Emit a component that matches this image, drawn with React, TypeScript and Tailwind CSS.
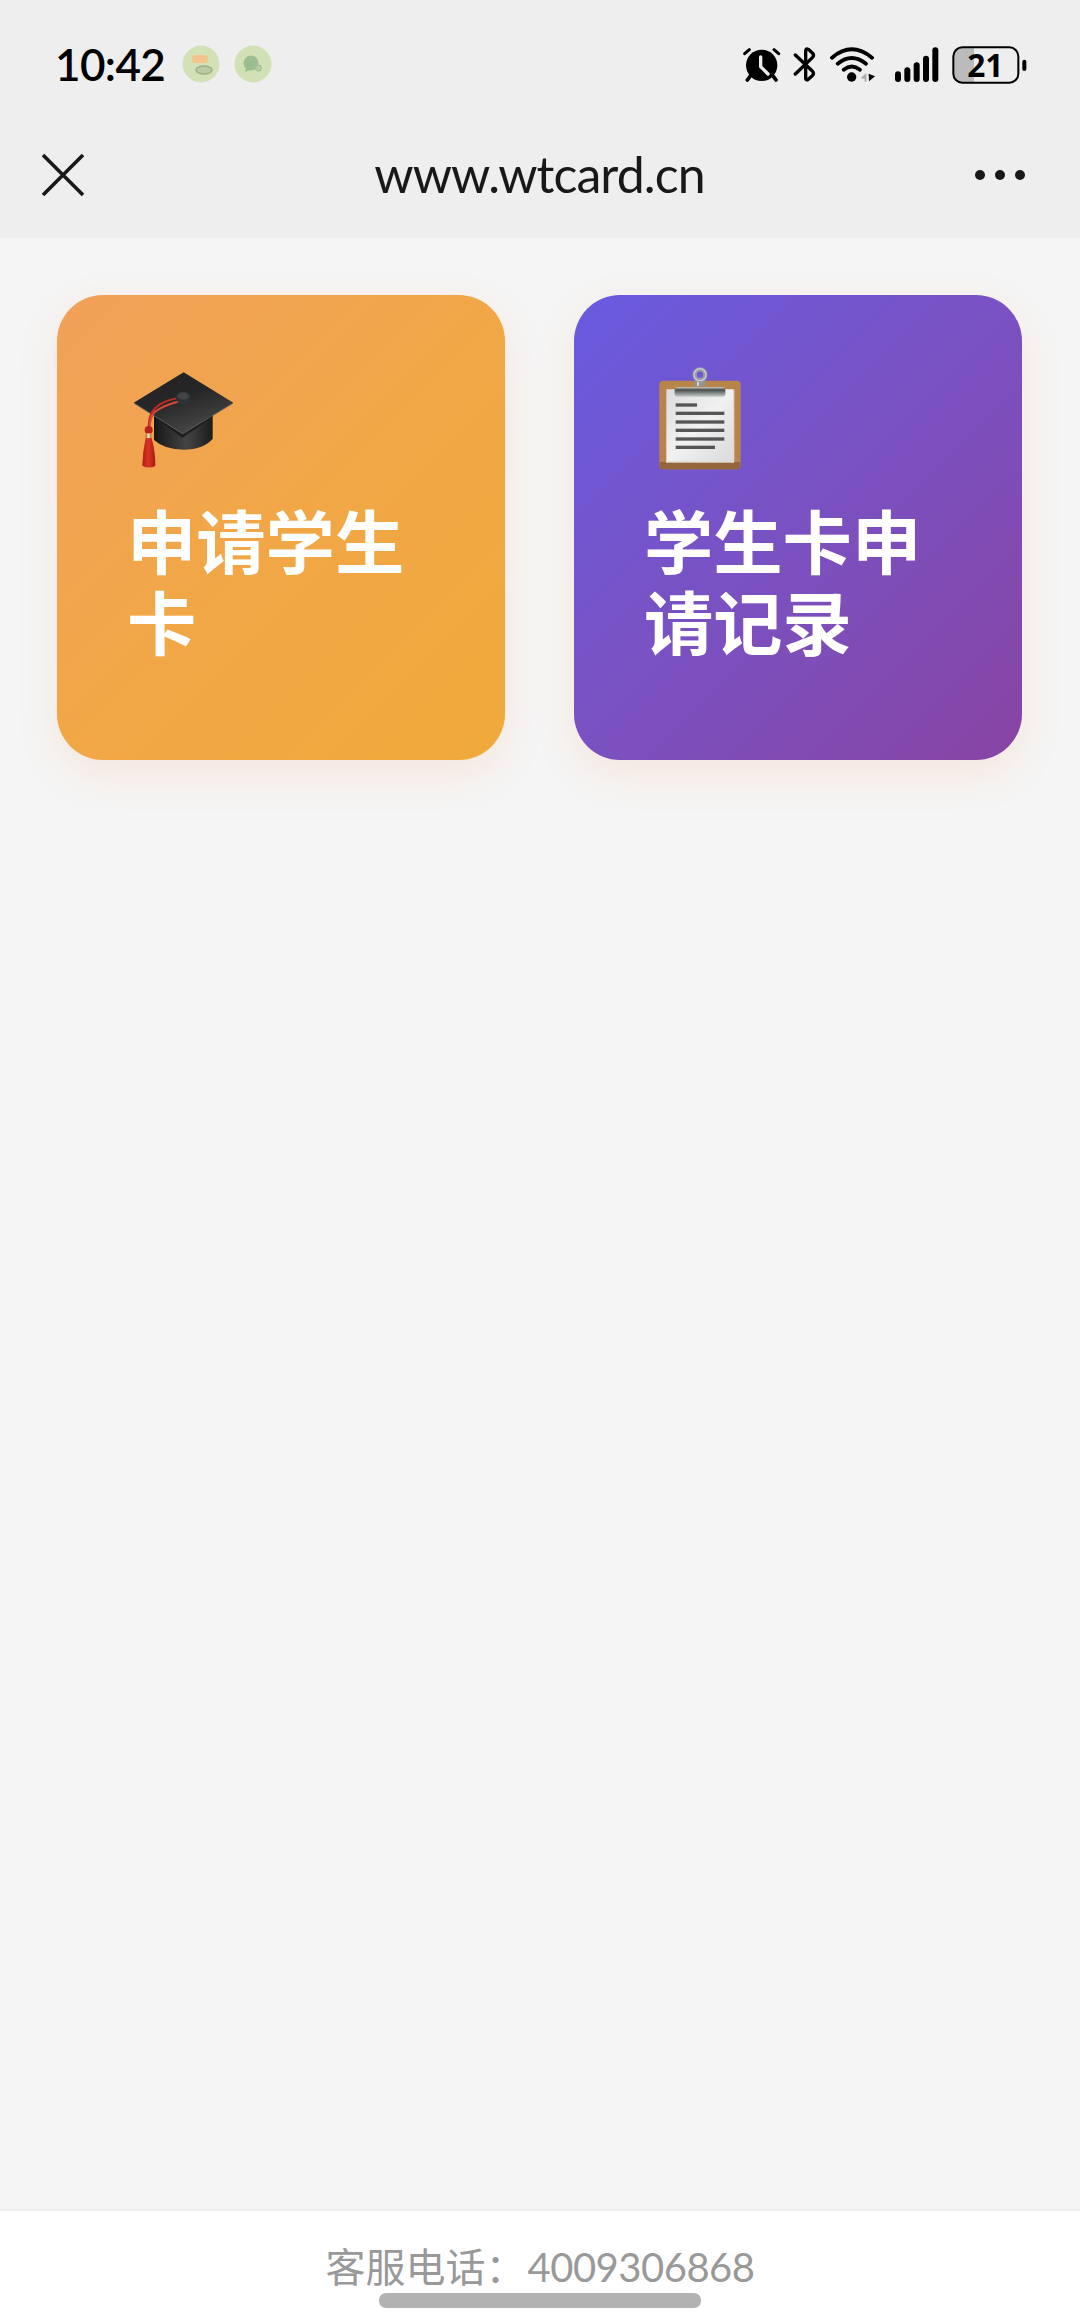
import type { ReactNode } from 'react'

interface CardProps {
  title: string
  icon: ReactNode
  className: string
}

function AlarmIcon() {
  return (
    <svg viewBox="36 40 120 132" className="w-10 h-11">
      <circle cx="95" cy="107" r="47" />
      <path d="M60 140l-8 11M130 140l8 11" stroke="#000" strokeWidth="11" strokeLinecap="round" />
      <path d="M44 72l14-12M146 72l-14-12" stroke="#000" strokeWidth="9" strokeLinecap="round" />
      <path d="M92 82v29l22 22" fill="none" stroke="#eee" strokeWidth="10" strokeLinecap="round" strokeLinejoin="round" />
    </svg>
  )
}

function BluetoothIcon() {
  return (
    <svg viewBox="186 40 75 132" className="w-[25px] h-11">
      <path
        d="M196 76L246 123Q254 131 247 138L233 150Q227 153 227 144V66Q227 54 235 59L247 70Q254 77 247 84L196 133"
        fill="none"
        stroke="#000"
        strokeWidth="10"
        strokeLinecap="round"
        strokeLinejoin="round"
      />
    </svg>
  )
}

function WifiIcon() {
  return (
    <svg viewBox="297 40 141 132" className="w-[47px] h-11">
      <g fill="none" stroke="#000" strokeWidth="11.500" strokeLinecap="round">
        <path d="M306 84Q365 34 426 84" />
        <path d="M323 102Q365 68 408 102" />
        <path d="M341 120Q365 101 390 120" />
      </g>
      <circle cx="365" cy="142" r="14" />
      <path d="M392 146l17-16v26h-5v-9z" fill="#aaa" />
      <path d="M416 132l19 8-18 15z" />
    </svg>
  )
}

function SignalIcon() {
  return (
    <svg viewBox="492 40 138 132" className="w-[46px] h-11">
      <rect x="495" y="125" width="18" height="32" rx="9" />
      <rect x="523" y="113" width="18" height="44" rx="9" />
      <rect x="551" y="98" width="18" height="59" rx="9" />
      <rect x="579" y="78" width="18" height="79" rx="9" />
      <rect x="607" y="53" width="18" height="104" rx="9" />
    </svg>
  )
}

function BatteryIcon() {
  return (
    <svg viewBox="666 40 228 132" className="w-[76px] h-11">
      <path d="M732 53H698Q670 53 670 80V132Q670 159 698 159H732Z" fill="#bbb" />
      <rect x="670" y="53" width="195" height="106" rx="27" fill="none" stroke="#000" strokeWidth="6" />
      <rect x="877" y="90" width="12" height="34" rx="6" />
      <text x="766" y="142" textAnchor="middle" fontSize="95" className="font-['Open_Sans',sans-serif] font-bold">21</text>
    </svg>
  )
}

function GraduationCap() {
  return (
    <svg viewBox="70 60 306 300" className="w-[102px] h-[100px]">
      <defs>
        <linearGradient id="capTop" x1="0" y1="0" x2="0.5" y2="1">
          <stop offset="0" stopColor="#222" />
          <stop offset="0.5" stopColor="#262626" />
          <stop offset="1" stopColor="#454545" />
        </linearGradient>
        <linearGradient id="capBase">
          <stop offset="0" stopColor="#161616" />
          <stop offset="0.55" stopColor="#444" />
          <stop offset="1" stopColor="#1c1c1c" />
        </linearGradient>
        <linearGradient id="tassel">
          <stop offset="0" stopColor="#a91f16" />
          <stop offset="0.45" stopColor="#dc3323" />
          <stop offset="1" stopColor="#a31b13" />
        </linearGradient>
      </defs>
      <path d="M133 190V270Q165 299 222 299Q283 298 309 266V190Z" fill="url(#capBase)" />
      <path d="M133 198L218 264L309 200V190H133Z" fill="#121212" opacity="0.7" />
      <path d="M72 158L222 67L371 158L219 252Z" fill="url(#capTop)" />
      <path d="M74 160L219 251L369 160" fill="none" stroke="#5b5b5b" strokeWidth="3" />
      <path d="M208 143Q145 155 127 187Q117 205 117 234" fill="none" stroke="#bd2c21" strokeWidth="6" />
      <path d="M212 153Q157 167 134 187Q123 200 119 234" fill="none" stroke="#d84a38" strokeWidth="6" />
      <ellipse cx="221" cy="144" rx="22" ry="19" fill="#303236" />
      <ellipse cx="221" cy="138" rx="17" ry="11" fill="#424448" />
      <circle cx="117" cy="240" r="12" fill="#ba2118" />
      <path d="M108 264H126Q138 310 137 348Q117 358 98 347Q99 304 108 264Z" fill="url(#tassel)" />
      <rect x="107" y="250" width="19" height="15" rx="3" fill="#c78443" />
      <rect x="113" y="251" width="7" height="13" fill="#f5dfbb" />
    </svg>
  )
}

function Clipboard() {
  return (
    <svg viewBox="56 46 252 315" className="w-[84px] h-[105px]">
      <defs>
        <linearGradient id="paper" x1="0" y1="0" x2="1" y2="1">
          <stop offset="0" stopColor="#dcdcdf" />
          <stop offset="0.5" stopColor="#f1f1f1" />
          <stop offset="1" stopColor="#d9d9d9" />
        </linearGradient>
        <linearGradient id="clip" x1="0" y1="0" x2="0" y2="1">
          <stop offset="0" stopColor="#d1d1c5" />
          <stop offset="0.3" stopColor="#444b4b" />
          <stop offset="0.55" stopColor="#737c7b" />
          <stop offset="1" stopColor="#c5cac8" />
        </linearGradient>
      </defs>
      <rect x="60" y="90" width="244" height="266" rx="12" fill="#b98449" />
      <path d="M61 334H303V345Q303 356 292 356H72Q61 356 61 345Z" fill="#94663c" />
      <path d="M81 116H283V334H81Z" fill="url(#paper)" />
      <path d="M283 117V334M80 334H284" stroke="#dedad0" strokeWidth="4" />
      <path d="M166 89H198V107H166Z" fill="#92958f" />
      <path d="M176 94V106" stroke="#e2e2dd" strokeWidth="5" />
      <rect x="106" y="109" width="152" height="29" rx="9" fill="url(#clip)" />
      <circle cx="182" cy="72" r="16" fill="none" stroke="#999ca5" strokeWidth="13" />
      <circle cx="182" cy="72" r="18" fill="none" stroke="#cacbd0" strokeWidth="4" />
      <g fill="#555">
        <rect x="109" y="158" width="64" height="10" />
        <rect x="109" y="183" width="146" height="10" />
        <rect x="109" y="209" width="146" height="10" />
        <rect x="109" y="234" width="146" height="10" />
        <rect x="109" y="260" width="146" height="10" />
        <rect x="109" y="285" width="118" height="10" />
      </g>
    </svg>
  )
}

function StatusBar() {
  return (
    <div className="flex h-[130px] items-start justify-between pl-[55px] pr-[52px]">
      <div className="flex items-center pt-[42px]">
        <span className="w-[126px] whitespace-nowrap font-['Lato','Noto_Sans',sans-serif] text-[44px] leading-[44px] font-semibold tracking-[-0.6px] text-black">
          10:42
        </span>
        <svg viewBox="0 0 94 38" className="h-[38px] w-[94px]">
          <circle cx="20" cy="19" r="18.5" fill="#d3e2b6" />
          <rect x="11" y="10" width="16" height="8" rx="3" fill="#f2c58e" />
          <ellipse cx="23" cy="25" rx="8" ry="4" fill="#b9cba1" stroke="#9fb18c" strokeWidth="1.5" />
          <circle cx="72" cy="19" r="18.5" fill="#d0e2b5" />
          <circle cx="70" cy="18" r="7.5" fill="#9cbd91" />
          <path d="M65 23l-1 4 5-2z" fill="#9cbd91" />
          <circle cx="77.500" cy="23" r="3" fill="#b3cda1" stroke="#9cbd91" />
        </svg>
      </div>
      <div className="flex pt-[43px]">
        <AlarmIcon />
        <div className="ml-2.5"><BluetoothIcon /></div>
        <div className="ml-3"><WifiIcon /></div>
        <div className="ml-[18px]"><SignalIcon /></div>
        <div className="ml-3"><BatteryIcon /></div>
      </div>
    </div>
  )
}

function NavBar() {
  return (
    <div className="grid h-[108px] grid-cols-[120px_1fr_120px] pl-[41px] pr-[55px]">
      <svg viewBox="0 0 44 44" className="mt-[23px] h-11 w-11">
        <path d="M2 2L42 42M42 2L2 42" stroke="#181818" strokeWidth="3.6" />
      </svg>
      <h1 className="whitespace-nowrap pt-[14px] pl-[13px] text-center font-['Lato','Noto_Sans',sans-serif] text-[50px] leading-[60px] tracking-[-0.9px] text-[#181818]">
        www.wtcard.cn
      </h1>
      <div className="flex justify-end gap-2.5 pt-10">
        <span className="size-2.5 rounded-full bg-[#181818]" />
        <span className="size-2.5 rounded-full bg-[#181818]" />
        <span className="size-2.5 rounded-full bg-[#181818]" />
      </div>
    </div>
  )
}

function Card({ title, icon, className }: CardProps) {
  return (
    <div className={`h-[465px] rounded-[46px] shadow-[0_14px_42px_rgba(255,140,60,0.13)] ${className}`}>
      <div className="h-[134px]">{icon}</div>
      <h2 className="w-[280px] font-['Noto_Sans_CJK_SC',sans-serif] text-[69.300px] leading-[81px] font-bold text-white">
        {title}
      </h2>
    </div>
  )
}

export default function App() {
  return (
    <div className="flex h-[2324px] w-[1080px] flex-col overflow-hidden bg-[#f5f5f5]">
      <header className="bg-[#eee]">
        <StatusBar />
        <NavBar />
      </header>

      <main className="grid flex-1 grid-cols-2 content-start gap-[69px] pl-[57px] pr-[58px] pt-[57px]">
        <Card
          title="申请学生卡"
          icon={<div className="pt-[5px] pl-[6px]"><GraduationCap /></div>}
          className="bg-linear-135 from-[#f2a159] via-[#f1a746] to-[#f0a93a] pl-[70px] pt-[70px]"
        />
        <Card
          title="学生卡申请记录"
          icon={<div className="pt-px pl-[14px]"><Clipboard /></div>}
          className="bg-linear-135 from-[#685be0] to-[#8844a3] pl-[70px] pt-[70px]"
        />
      </main>

      <footer className="flex h-[115px] flex-col items-center border-t-2 border-[#eee] bg-white">
        <p className="h-[82px] whitespace-nowrap pt-[26px] font-['Lato','Noto_Sans_CJK_SC',sans-serif] text-[40px] leading-[60px] text-[#999]">
          客服电话：<span className="ml-[2px] tracking-[-0.5px]">4009306868</span>
        </p>
        <div className="z-10 h-[15px] w-[322px] shrink-0 rounded-[7px] bg-[#b2b2b2]" />
      </footer>
    </div>
  )
}
